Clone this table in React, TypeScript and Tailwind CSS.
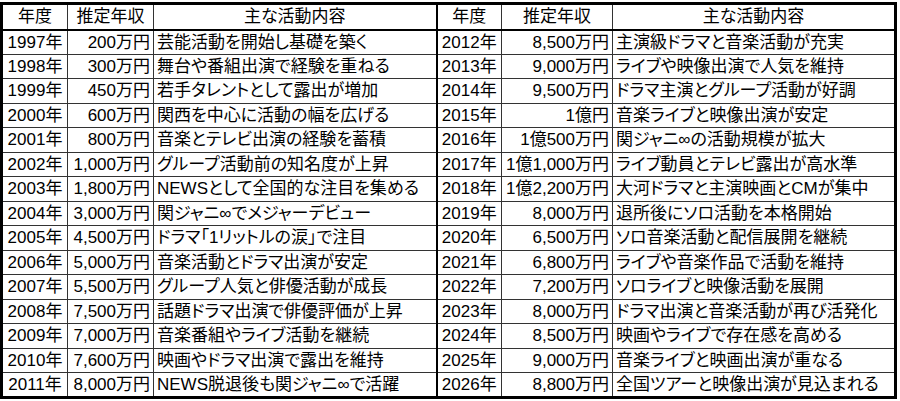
import React from 'react';

type Row = [string, string, string];

const left: Row[] = [
  ['1997年', '200万円', '芸能活動を開始し基礎を築く'],
  ['1998年', '300万円', '舞台や番組出演で経験を重ねる'],
  ['1999年', '450万円', '若手タレントとして露出が増加'],
  ['2000年', '600万円', '関西を中心に活動の幅を広げる'],
  ['2001年', '800万円', '音楽とテレビ出演の経験を蓄積'],
  ['2002年', '1,000万円', 'グループ活動前の知名度が上昇'],
  ['2003年', '1,800万円', 'NEWSとして全国的な注目を集める'],
  ['2004年', '3,000万円', '関ジャニ∞でメジャーデビュー'],
  ['2005年', '4,500万円', 'ドラマ「1リットルの涙」で注目'],
  ['2006年', '5,000万円', '音楽活動とドラマ出演が安定'],
  ['2007年', '5,500万円', 'グループ人気と俳優活動が成長'],
  ['2008年', '7,500万円', '話題ドラマ出演で俳優評価が上昇'],
  ['2009年', '7,000万円', '音楽番組やライブ活動を継続'],
  ['2010年', '7,600万円', '映画やドラマ出演で露出を維持'],
  ['2011年', '8,000万円', 'NEWS脱退後も関ジャニ∞で活躍'],
];

const right: Row[] = [
  ['2012年', '8,500万円', '主演級ドラマと音楽活動が充実'],
  ['2013年', '9,000万円', 'ライブや映像出演で人気を維持'],
  ['2014年', '9,500万円', 'ドラマ主演とグループ活動が好調'],
  ['2015年', '1億円', '音楽ライブと映像出演が安定'],
  ['2016年', '1億500万円', '関ジャニ∞の活動規模が拡大'],
  ['2017年', '1億1,000万円', 'ライブ動員とテレビ露出が高水準'],
  ['2018年', '1億2,200万円', '大河ドラマと主演映画とCMが集中'],
  ['2019年', '8,000万円', '退所後にソロ活動を本格開始'],
  ['2020年', '6,500万円', 'ソロ音楽活動と配信展開を継続'],
  ['2021年', '6,800万円', 'ライブや音楽作品で活動を維持'],
  ['2022年', '7,200万円', 'ソロライブと映像活動を展開'],
  ['2023年', '8,000万円', 'ドラマ出演と音楽活動が再び活発化'],
  ['2024年', '8,500万円', '映画やライブで存在感を高める'],
  ['2025年', '9,000万円', '音楽ライブと映画出演が重なる'],
  ['2026年', '8,800万円', '全国ツアーと映像出演が見込まれる'],
];

const cell = 'p-0 border border-[#333] whitespace-nowrap leading-none';

export default function App() {
  return (
    <div
      className="bg-white w-[900px] h-[401px] pt-[2px] text-black text-[17px] [font-feature-settings:'palt']"
      style={{ fontFamily: '"Liberation Sans", "Noto Sans CJK JP", sans-serif' }}
    >
      <table className="border-collapse border-[3px] border-black table-fixed w-[896px]">
        <colgroup>
          <col className="w-[66px]" />
          <col className="w-[86px]" />
          <col className="w-[283px]" />
          <col className="w-[65px]" />
          <col className="w-[111px]" />
          <col className="w-[283px]" />
        </colgroup>
        <thead>
          <tr className="h-[26px] border-b-2 border-black">
            <th className={`${cell} font-normal text-center`}>年度</th>
            <th className={`${cell} font-normal text-center`}>推定年収</th>
            <th className={`${cell} font-normal text-center border-r-2 border-r-black`}>主な活動内容</th>
            <th className={`${cell} font-normal text-center`}>年度</th>
            <th className={`${cell} font-normal text-center`}>推定年収</th>
            <th className={`${cell} font-normal text-center`}>主な活動内容</th>
          </tr>
        </thead>
        <tbody>
          {left.map((l, i) => {
            const r = right[i];
            return (
              <tr key={l[0]} className="h-[24.5px]">
                <td className={`${cell} text-center`}>{l[0]}</td>
                <td className={`${cell} text-right pr-[3px]`}>{l[1]}</td>
                <td className={`${cell} text-left pl-[3px] border-r-2 border-r-black`}>{l[2]}</td>
                <td className={`${cell} text-center`}>{r[0]}</td>
                <td className={`${cell} text-right pr-[3px]`}>{r[1]}</td>
                <td className={`${cell} text-left pl-[3px]`}>{r[2]}</td>
              </tr>
            );
          })}
        </tbody>
      </table>
    </div>
  );
}
